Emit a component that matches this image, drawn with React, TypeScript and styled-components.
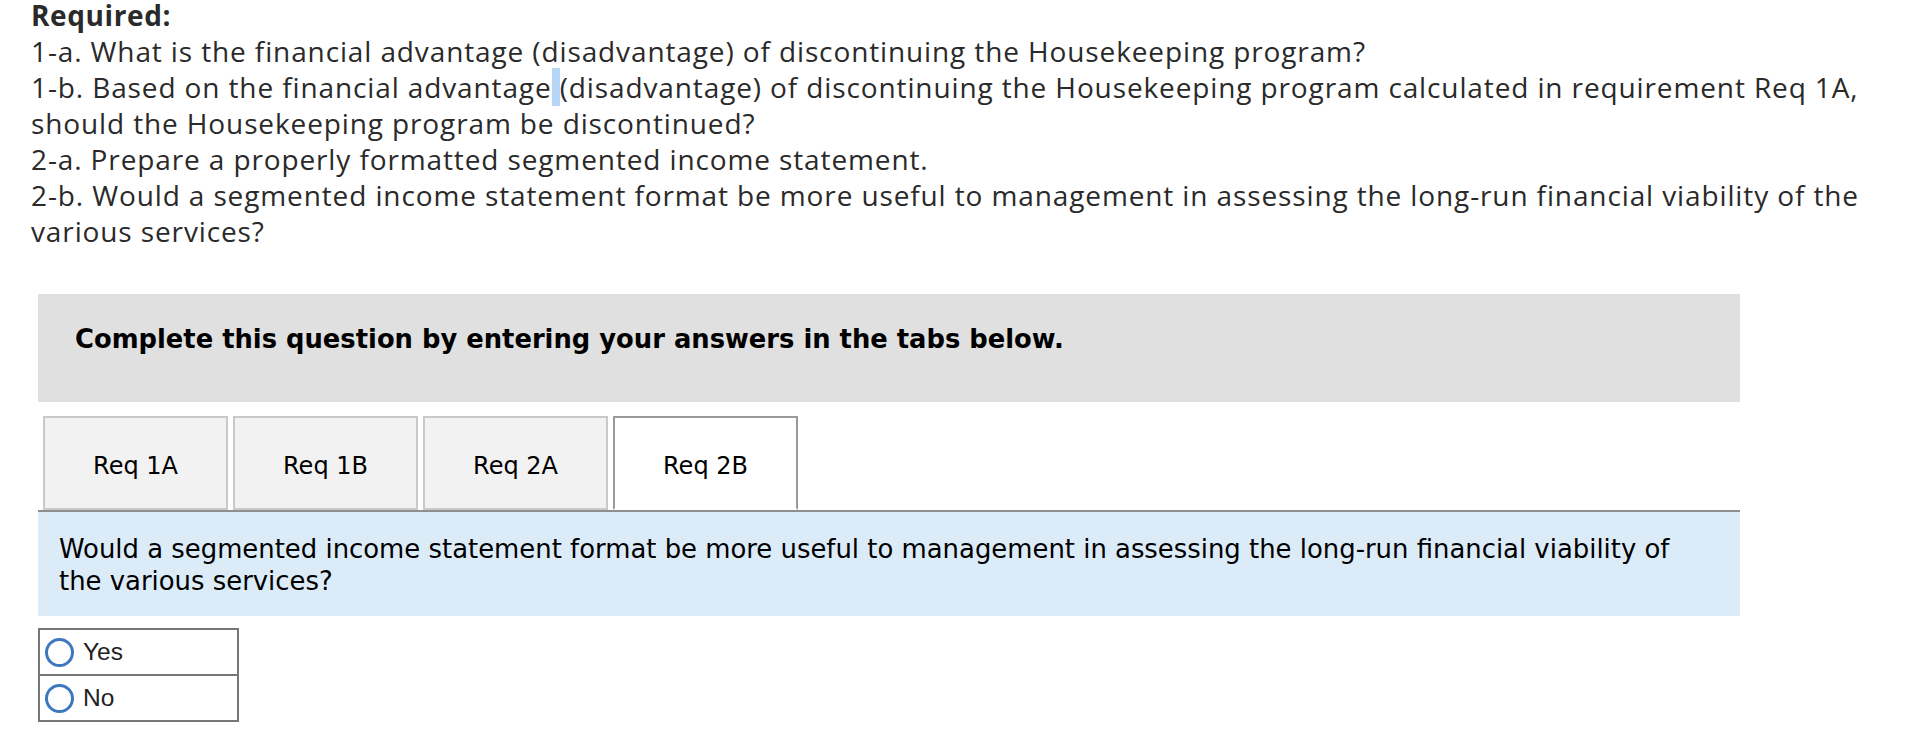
import React from "react";
import styled, { createGlobalStyle } from "styled-components";

const GlobalStyle = createGlobalStyle`
  html, body {
    margin: 0;
    padding: 0;
    background: #ffffff;
  }
  body {
    font-family: "Open Sans", "Liberation Sans", sans-serif;
  }
`;

const Page = styled.div`
  padding: 0 4px 0 31px;
  width: 1922px;
  box-sizing: border-box;
`;

const Intro = styled.div`
  margin-top: -3px;
  font-family: "Open Sans", "Liberation Sans", sans-serif;
  font-size: 28px;
  letter-spacing: 0.88px;
  line-height: 36px;
  color: #2a2a2a;
`;

const Heading = styled.div`
  font-weight: 700;
  letter-spacing: 0.6px;
`;

const Line = styled.div``;

const Selection = styled.span`
  background: #b6d5f7;
`;

const Question = styled.div`
  margin: 45px 0 0 7px;
  width: 1702px;
  font-family: "DejaVu Sans", Verdana, sans-serif;
`;

const Instructions = styled.div`
  height: 108px;
  background: #e0e0e0;
  padding: 30px 0 0 37px;
  box-sizing: border-box;
  font-weight: 700;
  font-size: 25.8px;
  line-height: 30px;
  color: #000;
`;

const TabList = styled.div`
  display: flex;
  gap: 5px;
  margin-top: 14px;
  padding-left: 5px;
  border-bottom: 2px solid #8e8e8e;
`;

const Tab = styled.div<{ $active?: boolean }>`
  width: 185px;
  height: 94px;
  box-sizing: border-box;
  padding-top: 5px;
  display: flex;
  align-items: center;
  justify-content: center;
  font-size: 24px;
  color: #000;
  background: ${(p) => (p.$active ? "#ffffff" : "#f2f2f2")};
  border: 2px solid ${(p) => (p.$active ? "#9a9a9a" : "#c9c9c9")};
  border-bottom-color: ${(p) => (p.$active ? "#ffffff" : "#c9c9c9")};
  margin-bottom: ${(p) => (p.$active ? "-2px" : "0")};
`;

const Prompt = styled.div`
  background: #dcebf8;
  padding: 21px 30px 19px 21px;
  font-size: 25.9px;
  line-height: 32px;
  color: #000;
`;

const Choices = styled.table`
  margin-top: 12px;
  border-collapse: collapse;
  width: 201px;
  font-family: "Liberation Sans", Arial, sans-serif;
`;

const ChoiceCell = styled.td`
  border: 2px solid #767676;
  height: 44px;
  padding: 0 0 0 5px;
  box-sizing: content-box;
`;

const ChoiceLabel = styled.label`
  display: flex;
  align-items: center;
  gap: 9px;
  font-size: 24.5px;
  color: #222;
`;

const Radio = styled.span`
  width: 29px;
  height: 29px;
  box-sizing: border-box;
  border: 3.5px solid #3b78bd;
  border-radius: 50%;
  background: #fff;
  flex: none;
`;

export default function App() {
  const tabs = ["Req 1A", "Req 1B", "Req 2A", "Req 2B"];
  return (
    <>
      <GlobalStyle />
      <Page>
        <Intro>
          <Heading>Required:</Heading>
          <Line>
            1-a. What is the financial advantage (disadvantage) of discontinuing the Housekeeping program?
          </Line>
          <Line>
            1-b. Based on the financial advantage<Selection> </Selection>(disadvantage) of discontinuing the
            Housekeeping program calculated in requirement Req 1A, should the Housekeeping program be discontinued?
          </Line>
          <Line>2-a. Prepare a properly formatted segmented income statement.</Line>
          <Line>
            2-b. Would a segmented income statement format be more useful to management in assessing the long-run
            financial viability of the various services?
          </Line>
        </Intro>
        <Question>
          <Instructions>Complete this question by entering your answers in the tabs below.</Instructions>
          <TabList>
            {tabs.map((t, i) => (
              <Tab key={t} $active={i === 3}>
                {t}
              </Tab>
            ))}
          </TabList>
          <Prompt>
            Would a segmented income statement format be more useful to management in assessing the long-run
            financial viability of the various services?
          </Prompt>
          <Choices>
            <tbody>
              {["Yes", "No"].map((c) => (
                <tr key={c}>
                  <ChoiceCell>
                    <ChoiceLabel>
                      <Radio />
                      {c}
                    </ChoiceLabel>
                  </ChoiceCell>
                </tr>
              ))}
            </tbody>
          </Choices>
        </Question>
      </Page>
    </>
  );
}
